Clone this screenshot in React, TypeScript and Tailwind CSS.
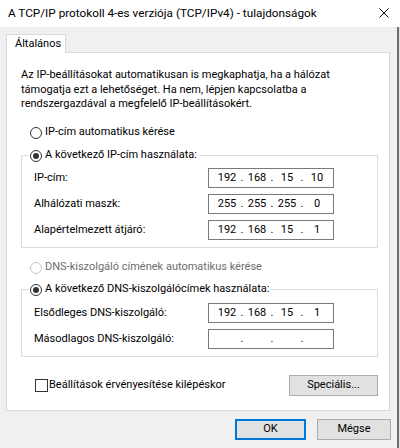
import React from 'react';

const FONT = "font-['Roboto','Liberation_Sans',sans-serif]";

const Radio = ({ checked, disabled, label }: { checked?: boolean; disabled?: boolean; label: string }) => (
  <div className="flex h-[15px] items-center">
    <span
      className={`flex h-[12px] w-[12px] items-center justify-center rounded-full border bg-white ${
        disabled ? 'border-[#c4c4c4]' : 'border-[#333333]'
      }`}
    >
      {checked && <span className="h-[6px] w-[6px] rounded-full bg-[#333333]" />}
    </span>
    <span className={`ml-[3px] ${disabled ? 'text-[#6d6d6d]' : 'text-black'}`}>{label}</span>
  </div>
);

const IpField = ({ value }: { value: string[] }) => (
  <div className="flex h-[20px] w-[126px] items-center border border-[#7a7a7a] bg-white pl-[6px]">
    {value.map((octet, i) => (
      <React.Fragment key={i}>
        <span className="w-[24px] text-center">{octet}</span>
        {i < 3 && <span className="w-[6px] text-center">.</span>}
      </React.Fragment>
    ))}
  </div>
);

const FieldRow = ({ label, value }: { label: string; value: string[] }) => (
  <div className="flex h-[20px] items-center">
    <span className="w-[186px] pl-[12px]">{label}</span>
    <IpField value={value} />
  </div>
);

const Button = ({ children, primary, className = '' }: { children: React.ReactNode; primary?: boolean; className?: string }) => (
  <button
    type="button"
    className={`flex h-[21px] items-center justify-center bg-[#e1e1e1] ${
      primary ? 'border-2 border-[#0078d7]' : 'border border-[#adadad]'
    } ${className}`}
  >
    {children}
  </button>
);

export default function App() {
  return (
    <div className={`flex h-[448px] w-[400px] flex-col overflow-hidden bg-[#f0f0f0] text-[11px] text-black ${FONT}`}>
      <div className="flex h-[27px] shrink-0 items-center justify-between bg-white pl-[8px] pr-[11px]">
        <span className="text-[11.75px]">A TCP/IP protokoll 4-es verziója (TCP/IPv4) - tulajdonságok</span>
        <svg width="10" height="10" viewBox="0 0 10 10" className="mb-[1px]">
          <path d="M0.5 0.5 L9.5 9.5 M9.5 0.5 L0.5 9.5" stroke="#111" strokeWidth="1" />
        </svg>
      </div>

      <div className="flex flex-1">
        <div className="w-[397px] pl-[6px] pt-[7px]">
          <div className="relative z-10 -mb-px flex h-[19px] w-[60px] items-center border border-b-0 border-[#d9d9d9] bg-white pl-[8px]">
            Általános
          </div>

          <div className="h-[359px] w-[384px] border border-[#d9d9d9] bg-white">
            <p className="ml-[14px] mt-[15px] h-[44px] leading-[14.5px]">
              Az IP-beállításokat automatikusan is megkaphatja, ha a hálózat
              <br />
              támogatja ezt a lehetőséget. Ha nem, lépjen kapcsolatba a
              <br />
              rendszergazdával a megfelelő IP-beállításokért.
            </p>

            <div className="ml-[23px] mt-[13px]">
              <Radio label="IP-cím automatikus kérése" />
            </div>

            <div className="ml-[14px] mt-[15px] h-[93px] w-[357px] border border-[#dcdcdc]">
              <div className="-mt-[8px] ml-[7px] w-fit bg-white pl-[1px] pr-[2px]">
                <Radio checked label="A következő IP-cím használata:" />
              </div>
              <div className="mt-[5px] flex flex-col gap-[6px]">
                <FieldRow label="IP-cím:" value={['192', '168', '15', '10']} />
                <FieldRow label="Alhálózati maszk:" value={['255', '255', '255', '0']} />
                <FieldRow label="Alapértelmezett átjáró:" value={['192', '168', '15', '1']} />
              </div>
            </div>

            <div className="ml-[23px] mt-[12px]">
              <Radio disabled label="DNS-kiszolgáló címének automatikus kérése" />
            </div>

            <div className="ml-[14px] mt-[14px] h-[68px] w-[357px] border border-[#dcdcdc]">
              <div className="-mt-[8px] ml-[7px] w-fit bg-white pl-[1px] pr-[2px]">
                <Radio checked label="A következő DNS-kiszolgálócímek használata:" />
              </div>
              <div className="mt-[6px] flex flex-col gap-[6px]">
                <FieldRow label="Elsődleges DNS-kiszolgáló:" value={['192', '168', '15', '1']} />
                <FieldRow label="Másodlagos DNS-kiszolgáló:" value={['', '', '', '']} />
              </div>
            </div>

            <div className="ml-[28px] mr-[11px] mt-[18px] flex h-[21px] items-start justify-between">
              <div className="mt-[2px] flex items-center">
                <span className="h-[13px] w-[13px] border border-[#333333] bg-white" />
                <span className="ml-[1px]">Beállítások érvényesítése kilépéskor</span>
              </div>
              <Button className="w-[89px]">Speciális...</Button>
            </div>
          </div>

          <div className="mt-[8px] flex justify-end gap-[11px] pr-[6px]">
            <Button primary className="w-[71px]">OK</Button>
            <Button className="w-[74px]">Mégse</Button>
          </div>
        </div>
        <div className="w-[2px] bg-[#6e6e6e]" />
        <div className="flex-1 bg-[#e3e3e3]" />
      </div>
    </div>
  );
}
